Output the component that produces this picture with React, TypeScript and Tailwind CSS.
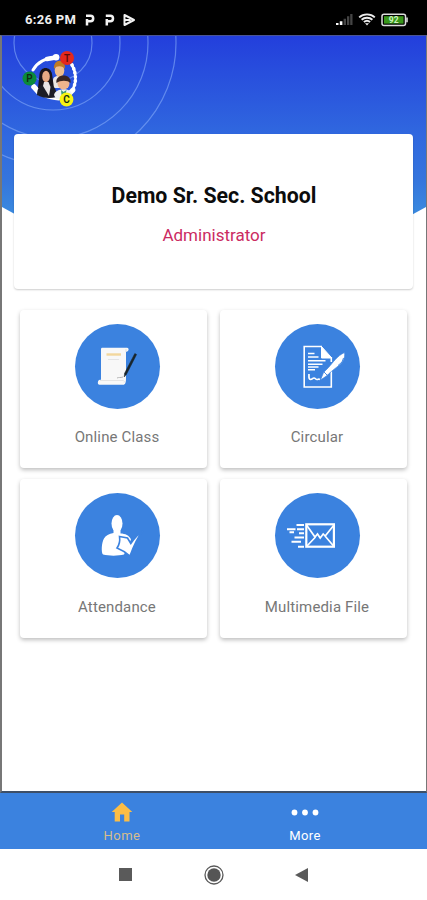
import type { ReactNode } from 'react';

interface Tile {
  label: string;
  icon: ReactNode;
}

const StatusBar = () => (
  <div className="flex h-[35px] items-center justify-between bg-black pt-[4px] pr-[18px] pl-[25px] text-white">
    <div className="flex items-center">
      <span className="w-[52px] text-[13px] font-bold whitespace-nowrap text-[#eee] tracking-[0.3px]">6:26 PM</span>
      <svg width="60" height="14" viewBox="0 0 60 14" className="ml-[7px]" fill="none" stroke="#f2f2f2" strokeWidth="2.500">
        <path d="M3 12.500V6M2 2.800h4.500a2.600 2.600 0 0 1 0 5.400H3" />
        <path d="M22.800 12.500V6M21.800 2.800h4.500a2.600 2.600 0 0 1 0 5.400h-3.500" />
        <path d="M40.500 2v10l9.500-5zM40.500 7h6" strokeWidth="2" strokeLinejoin="round" />
      </svg>
    </div>
    <div className="flex items-center gap-[5px]">
      <svg width="18" height="13" viewBox="0 0 18 13">
        <path d="M1 10h2.500v2H1zM4.800 8.300h2.600V12H4.800z" fill="#fff" />
        <path d="M8.600 5.800H11V12H8.600zM12 3.300h2.300V12H12zM15.200 1h2.300v11h-2.300z" fill="#444" />
      </svg>
      <svg width="18" height="13" viewBox="0 0 18 13" fill="none" stroke="#eee" strokeWidth="1.900">
        <path d="M1.200 4.400C5.500.400 12.500.400 16.800 4.400" />
        <path d="M3.600 6.800c3-2.700 7.800-2.700 10.800 0" />
        <path d="M5.900 9.100c1.800-1.500 4.400-1.500 6.200 0" />
        <path d="M7 10.200h4L9 12.500z" fill="#eee" stroke="none" />
      </svg>
      <svg width="28" height="14" viewBox="0 0 28 14">
        <rect x="1" y="1.200" width="23.500" height="11.300" rx="2" fill="none" stroke="#ddd" strokeWidth="1.500" />
        <rect x="3" y="3.200" width="19.500" height="7.400" fill="#38961a" />
        <path d="M25.200 4.500h1.600v4.700h-1.600z" fill="#ddd" />
        <text x="12.700" y="10" textAnchor="middle" fontSize="8.500" fontWeight="700" fill="#cdf2bf">
          92
        </text>
      </svg>
    </div>
  </div>
);

const HeaderBackdrop = () => (
  <svg className="absolute top-0 left-0" width="424" height="300" viewBox="2 36 424 300">
    <defs>
      <linearGradient id="sky" gradientUnits="userSpaceOnUse" x1="0" y1="36" x2="0" y2="216">
        <stop offset="0" stopColor="#233fdc" />
        <stop offset="0.55" stopColor="#3068df" />
        <stop offset="0.8" stopColor="#3575dd" />
        <stop offset="1" stopColor="#3a8bdf" />
      </linearGradient>
    </defs>
    <path d="M2 36h424v171l-40 22H42L2 207z" fill="url(#sky)" />
    <g fill="none" stroke="#86abf8" strokeOpacity="0.6" strokeWidth="1.200">
      <circle cx="53" cy="43" r="39" />
      <circle cx="53" cy="43" r="67" />
      <circle cx="53" cy="43" r="95" />
      <circle cx="53" cy="43" r="123" />
    </g>
  </svg>
);

const SchoolLogo = () => (
  <svg width="58" height="58" viewBox="21 50 58 58" className="relative">
    {/* beaded ring, growing towards each badge */}
    <g fill="none" stroke="#fff" strokeLinecap="round">
      <path d="M33 70C37 63 45 58 56 57.300" strokeWidth="3" />
      <path d="M47 59l10-1.800" strokeWidth="4.500" />
      <path d="M56 57.200h.1" strokeWidth="6.500" />
      <path d="M72 65c4 7 4.500 16 1.500 23" strokeWidth="2.600" />
      <path d="M72 65c4 7 4.500 16 1.500 23" strokeWidth="3.600" strokeDasharray="0.100 4" />
      <path d="M73 90l-3 3" strokeWidth="5" />
      <path d="M34 87c5 7 13 11.500 25 12" strokeWidth="3" />
      <path d="M34 87l5 5.500" strokeWidth="5.500" />
    </g>
    {/* man */}
    <path d="M53 80c0-6 14-6 15 0v8H53z" fill="#ece7e4" />
    <ellipse cx="59.500" cy="70.500" rx="4.800" ry="6.500" fill="#efbd8d" />
    <path d="M54 69c-1-11 12-11 11 0-2-3-8-4-11 0z" fill="#c07a24" />
    {/* woman */}
    <path d="M39.500 74c1-8 11-8 12.500 0l2 14H38z" fill="#19141b" />
    <path d="M37 95c0-8 4-11 9-11 7 0 11 4 10.500 13-7 2-14 1-19.500-2z" fill="#1c1d27" />
    <ellipse cx="46" cy="76.500" rx="3.800" ry="5.800" fill="#e6a985" />
    <path d="M44 82h4.500l2 5-1.500 9-6-10z" fill="#e8e4e6" />
    {/* child */}
    <path d="M54 95c1-7 17-8 18-1l-5 5H56z" fill="#eef1f4" />
    <ellipse cx="63.500" cy="83.500" rx="6" ry="6" fill="#efb48c" />
    <path d="M56.500 83c-2-10 16-10 14 0-3-3-10-3-14 0z" fill="#3a2623" />
    <path d="M61 90l2.500 2 3-2-1 5h-4z" fill="#3a9a78" />
    <circle cx="29.500" cy="78.500" r="7" fill="#0b8a3c" />
    <circle cx="67" cy="58" r="7" fill="#e5281c" />
    <circle cx="66.500" cy="99.500" r="6.900" fill="#f7f414" />
    <g textAnchor="middle" fontSize="10" fontWeight="600" fill="#112b12">
      <text x="29.500" y="82">
        P
      </text>
      <text x="67" y="61.500" fill="#5b0d08">
        T
      </text>
      <text x="66.500" y="103">
        C
      </text>
    </g>
  </svg>
);

const OnlineClassIcon = () => (
  <svg width="85" height="85" viewBox="0 0 85 85">
    <path
      d="M27 23.800h25c2.500 0 2 4-1 4v26.500c0 4-.5 6.500-3 6.500H24.500c-2.500 0-2-5 .5-5h1V27c0-2 0-3.200 1-3.200z"
      fill="#f8f8f8"
    />
    <path d="M25 56.500h23c1 0 2 1 1 2" fill="none" stroke="#e4e4e4" />
    <path d="M51 25v3" stroke="#dcdfe4" />
    <path d="M31.500 30.500h14.500" stroke="#f3d79d" strokeWidth="2.400" />
    <path d="M33 35.500h11" stroke="#e4e4e4" />
    <path d="M42 54c2-1 3 0 6-1" fill="none" stroke="#b6b6b6" />
    <path d="M59.800 29.500l1.800 1L51.500 50.300 49.200 53l.4-3.800z" fill="#19252b" stroke="#19252b" strokeWidth="0.500" />
  </svg>
);

const CircularIcon = () => (
  <svg width="85" height="85" viewBox="0 0 85 85" fill="none" stroke="#fff">
    <path d="M47 22.500H29.200V63h27.100V46M56.300 38v-5" strokeWidth="1.600" />
    <path d="M46.500 22.500V34h10.300z" fill="#fff" strokeWidth="1" />
    <path d="M33 29.500h6.500M33 33h10.500M33 36.700h17.500M33 40.200h14.500M33 43h10.500M33 45.800h7" strokeWidth="1.500" />
    <path d="M34 50c0 2-.5 5.500 1.500 5.500s2-1.500 3.500-1.500 1.500 1.500 3 1.500 1.500-1 3 0" strokeWidth="1.700" />
    <path
      d="M45.500 56l3-7.500c1.500-1.500 3.500-3.500 5-5 4.500-5 8.500-11.500 16-15 1 5-1.500 10-5.500 13-3.500 2.500-6.500 5-10.500 8.500l-2 2z"
      fill="#fff"
      stroke="#3b82df"
      strokeWidth="0.700"
    />
    <path d="M49 48l3.500 3.500M63 41.500l4-3.500 1.500-4" stroke="#3b82df" strokeWidth="0.900" />
  </svg>
);

const AttendanceIcon = () => (
  <svg width="85" height="85" viewBox="0 0 85 85" fill="#fff">
    <ellipse cx="42" cy="30.500" rx="5.500" ry="8.500" />
    <path d="M38.500 36h7v4.500c4.500 0 9 2 10.500 6L49 61.500c-6 1.500-15 1.500-21 0-2-2-1.500-12 1-16 1.500-3 5-4.500 9.500-5.500z" />
    <path
      d="M44.500 43.500l8 1.500 3.300 5.500C59 46 62.500 41 67.500 38.300 62 45 58.500 53.500 55 63c-3.500-3-8-6-13-8 2.500-3.500 3.200-7 2.500-11.500z"
      stroke="#3b82df"
      strokeWidth="1.600"
    />
  </svg>
);

const MultimediaIcon = () => (
  <svg width="85" height="85" viewBox="0 0 85 85" fill="none" stroke="#fff">
    <rect x="31.300" y="31.300" width="27.600" height="22.400" strokeWidth="2.200" />
    <path
      d="M31.500 32l8.500 12 2.500-3 2.700 4 3-4 2 2L59 32M31.500 53.500L40.500 44M59 53.500L50 43"
      strokeWidth="1.700"
    />
    <path
      d="M21.500 32H29M12 36.200h8.500M22 36.200h7M14.500 39.300H19M24 40.300h5M19.500 44.500H29M16.500 48.700H26M23 53.700h6"
      strokeWidth="2"
    />
  </svg>
);

const tiles: Tile[] = [
  { label: 'Online Class', icon: <OnlineClassIcon /> },
  { label: 'Circular', icon: <CircularIcon /> },
  { label: 'Attendance', icon: <AttendanceIcon /> },
  { label: 'Multimedia File', icon: <MultimediaIcon /> },
];

const TileCard = ({ label, icon }: Tile) => (
  <button className="flex h-[158.5px] flex-col items-center rounded-[4px] bg-white pt-[14px] pl-[7px] shadow-[0_2px_4px_rgba(0,0,0,0.26)]">
    <span className="size-[85px] rounded-full bg-[#3b82df]">{icon}</span>
    <span className="mt-[18.5px] text-[15px] leading-5 whitespace-nowrap text-[#777] tracking-[0.15px]">{label}</span>
  </button>
);

const BottomNav = () => (
  <nav className="flex h-[56px] bg-[#3b82df] text-[13px] leading-4">
    <a className="flex w-[244px] flex-col items-center pt-[9px] text-[#d6bd8d]">
      <svg width="22" height="20" viewBox="0 0 22 20" className="mb-[6px]">
        <path d="M11 .5L21.300 10H18.500v9.500H13.200v-7H9v7H3.700V10H.7z" fill="#fbbd46" />
      </svg>
      <span className="tracking-[0.5px]">Home</span>
    </a>
    <a className="flex w-[122px] flex-col items-center pt-[9px] text-white">
      <svg width="28" height="20" viewBox="0 0 28 20" className="mb-[6px]" fill="#fff">
        <circle cx="3.500" cy="10.500" r="2.900" />
        <circle cx="14" cy="10.500" r="2.900" />
        <circle cx="24.500" cy="10.500" r="2.900" />
      </svg>
      <span className="tracking-[0.4px]">More</span>
    </a>
  </nav>
);

const SystemNav = () => (
  <div className="flex h-[51px] items-center bg-white pl-[119px]">
    <span className="size-[13px] bg-[#5a5a5a]" />
    <svg width="20" height="20" viewBox="0 0 20 20" className="ml-[72px]">
      <circle cx="10" cy="10" r="9" fill="none" stroke="#5a5a5a" strokeWidth="1.300" />
      <circle cx="10" cy="10" r="6.700" fill="#555" />
    </svg>
    <svg width="13" height="14" viewBox="0 0 13 14" className="ml-[71px]">
      <path d="M0 7L13 0v14z" fill="#5a5a5a" />
    </svg>
  </div>
);

const App = () => {
  return (
    <div className="flex h-[900px] w-[427px] flex-col overflow-hidden bg-white font-['Roboto','Liberation_Sans',sans-serif]">
      <StatusBar />
      <main className="relative h-[758px] border-t border-r border-b-2 border-l-2 border-t-[#4a5596] border-r-[#777] border-b-[#3d4f68] border-l-[#777]">
        <HeaderBackdrop />
        <header className="relative h-[98px] pt-[14px] pl-[19px]">
          <SchoolLogo />
        </header>
        <section className="relative mr-[13px] ml-[12px] flex h-[155px] flex-col items-center rounded-[4px] bg-white pt-[49px] shadow-[0_1px_2px_rgba(0,0,0,0.2)]">
          <h1 className="pl-px text-[21.3px] leading-[26px] font-bold whitespace-nowrap text-[#0c0c0c]">
            Demo Sr. Sec. School
          </h1>
          <p className="mt-[15px] pl-px text-[17px] leading-[22px] text-[#cb2b62]">Administrator</p>
        </section>
        <section className="mt-[20.5px] grid grid-cols-[187px_187px] gap-x-[13px] gap-y-[11px] pl-[18px]">
          {tiles.map((tile) => (
            <TileCard key={tile.label} {...tile} />
          ))}
        </section>
      </main>
      <BottomNav />
      <SystemNav />
    </div>
  );
};

export default App;
